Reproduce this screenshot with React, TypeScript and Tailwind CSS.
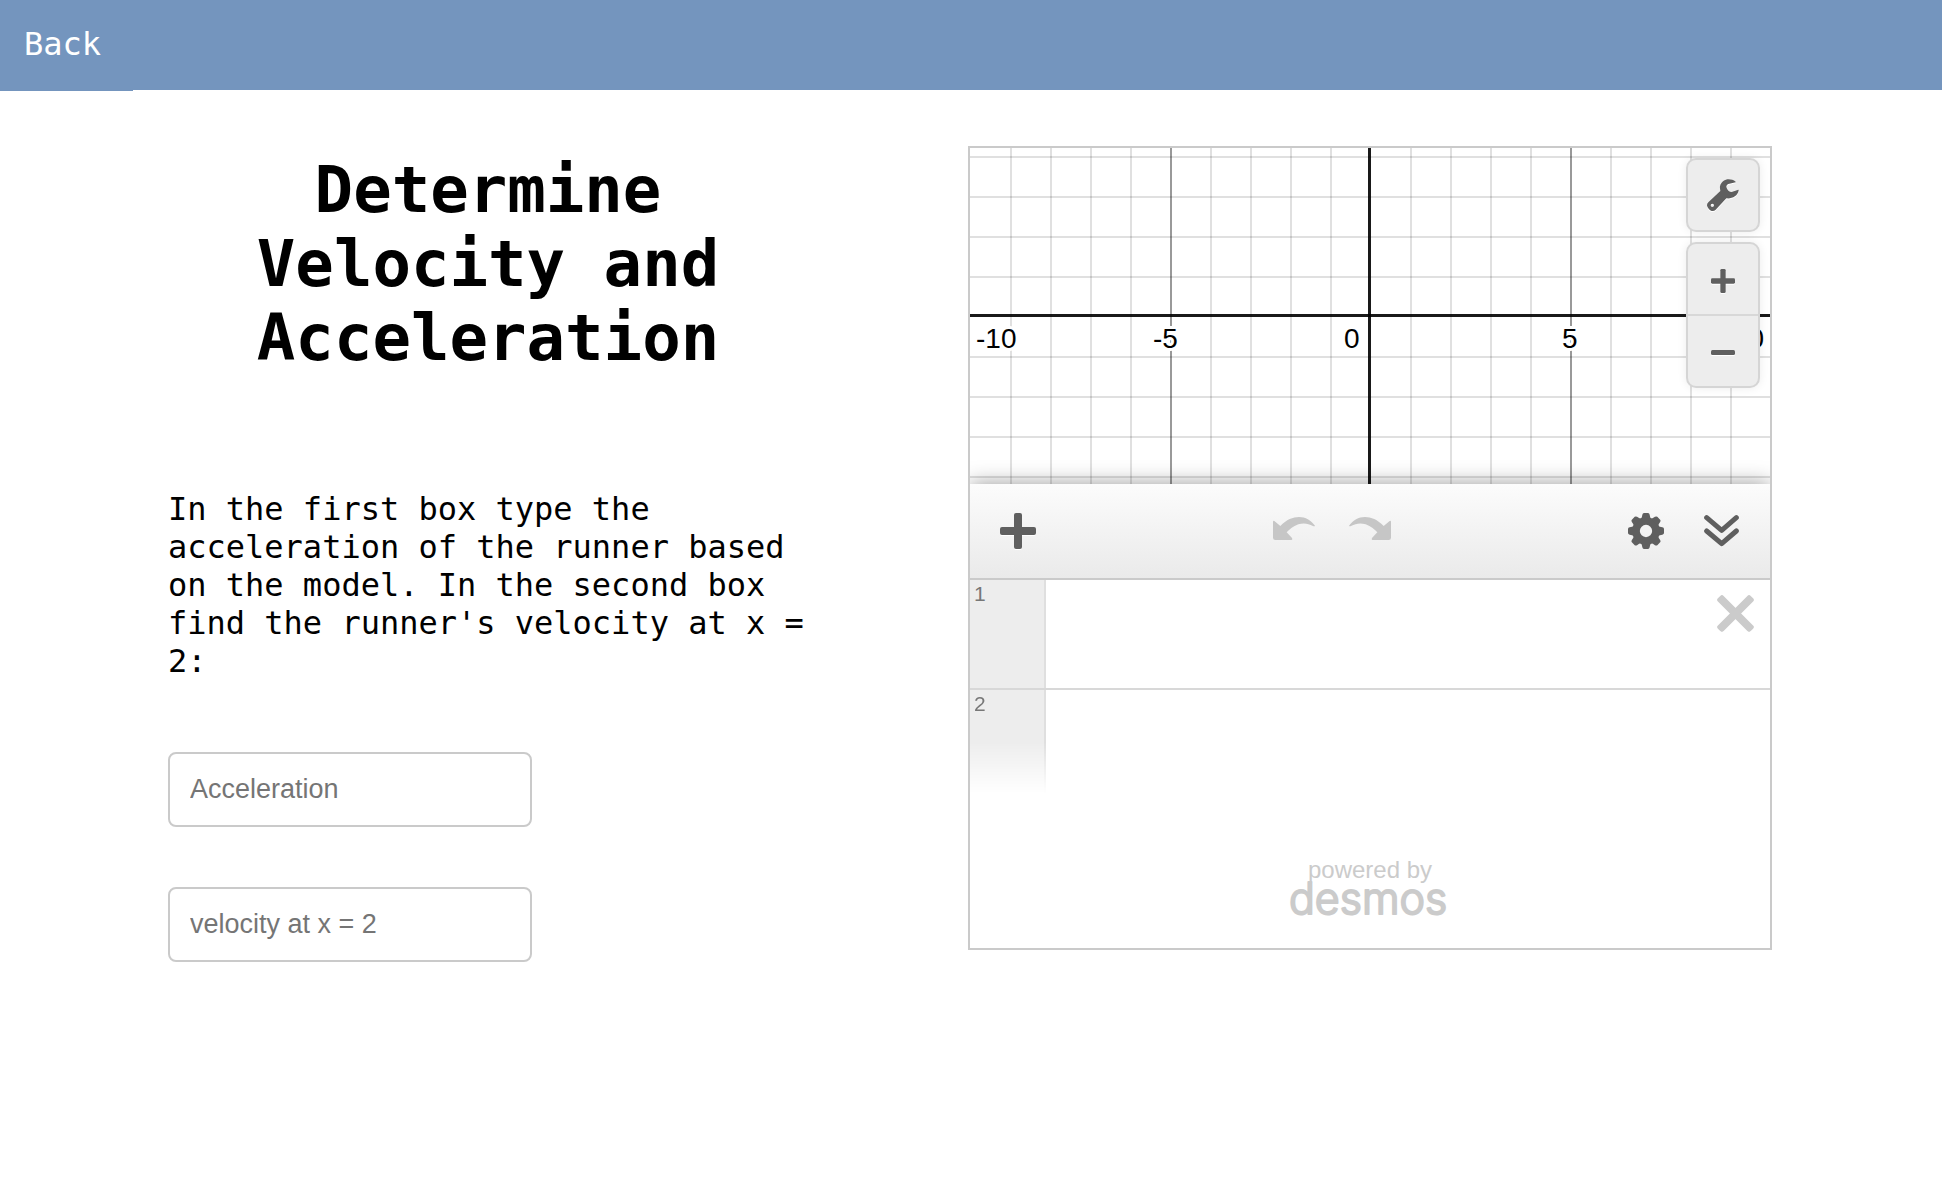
import React from "react";

const MINOR_X = Array.from({ length: 19 }, (_, i) => i + 1).filter((k) => k !== 10);
const MINOR_Y = [0, 1, 2, 3, 5, 6, 7, 8];

function Graph() {
  return (
    <svg
      className="block h-[336px] w-full font-['Liberation_Sans',Arial,sans-serif] text-[28px]"
      viewBox="0 0 800 336"
      preserveAspectRatio="xMidYMid slice"
      role="img"
      aria-label="Coordinate grid"
    >
      {MINOR_X.map((k) => (
        <rect key={k} x={k * 40} y="0" width="2" height="336" fill="#000" fillOpacity={k % 5 === 0 ? 0.4 : 0.12} />
      ))}
      {MINOR_Y.map((k) => (
        <rect key={k} x="0" y={8 + k * 40} width="800" height="2" fill="#000" fillOpacity="0.12" />
      ))}
      <rect x="398" y="0" width="3" height="336" fill="#000" fillOpacity="0.9" />
      <rect x="0" y="166" width="800" height="3" fill="#000" fillOpacity="0.9" />
      <g fill="#000" stroke="#fff" strokeWidth="6" strokeLinejoin="round" paintOrder="stroke">
        <text x="6" y="200">-10</text>
        <text x="183" y="200">-5</text>
        <text x="374" y="200">0</text>
        <text x="592" y="200">5</text>
        <text x="794" y="200" textAnchor="end">10</text>
      </g>
    </svg>
  );
}

function WrenchIcon() {
  return (
    <svg width="32" height="32" viewBox="0 0 96 96" fill="#5f5f5f" className="drop-shadow-[0_1px_0_#fff]" aria-hidden="true">
      <path
        fillRule="evenodd"
        d="M86 8C70 -4 45 -2 39 22C38 28 40 32 40 36L4 70C-2 76 -1 83 5 89C11 97 20 98 26 92L58 58C75 60 92 52 95 34C95 32 94 32 92 33L74 39C67 39 60 33 58 24C58 20 60 17 64 15L86 10ZM16 74A5 5 0 1 0 16 84A5 5 0 1 0 16 74Z"
      />
    </svg>
  );
}

function PlusIcon({ size }: { size: number }) {
  return (
    <svg width={size} height={size} viewBox="0 0 36 36" fill="#5f5f5f" className="drop-shadow-[0_1px_0_#fff]" aria-hidden="true">
      <rect x="14" y="0" width="8" height="36" rx="2" />
      <rect x="0" y="14" width="36" height="8" rx="2" />
    </svg>
  );
}

function MinusIcon() {
  return (
    <svg width="24" height="24" viewBox="0 0 24 24" fill="#5f5f5f" className="drop-shadow-[0_1px_0_#fff]" aria-hidden="true">
      <rect x="0" y="9" width="24" height="5" rx="1.5" />
    </svg>
  );
}

function ArrowIcon({ flipped = false }: { flipped?: boolean }) {
  return (
    <svg width="42" height="23" viewBox="0 0 126 69" fill="#c6c6c6" aria-hidden="true">
      <path
        transform={flipped ? "translate(126 0) scale(-1 1)" : undefined}
        d="M4 12L22 27C40 8 60 0 78 0C98 0 113 10 126 26C124 29 122 28 120 27C105 19 92 17 76 22C60 28 48 38 41 46L57 63Q60 69 53 69H7Q0 69 0 62V15Q0 10 4 12Z"
      />
    </svg>
  );
}

function GearIcon() {
  return (
    <svg width="36" height="36" viewBox="-54 -54 108 108" fill="#5f5f5f" aria-hidden="true">
      <circle r="30" fill="none" stroke="#5f5f5f" strokeWidth="23" />
      {[0, 45, 90, 135, 180, 225, 270, 315].map((a) => (
        <path key={a} transform={`rotate(${a})`} d="M-15 -36Q-12 -41 -11 -49Q-10 -54 -6 -54H6Q10 -54 11 -49Q12 -41 15 -36Z" />
      ))}
    </svg>
  );
}

function ChevronsIcon() {
  return (
    <svg width="35" height="32" viewBox="0 0 105 96" fill="none" stroke="#5f5f5f" strokeWidth="15" strokeLinecap="round" strokeLinejoin="round" aria-hidden="true">
      <path d="M8 8L53 46L97 8M8 48L53 86L97 48" />
    </svg>
  );
}

function CloseIcon() {
  return (
    <svg width="37" height="37" viewBox="-55 -55 110 110" fill="#cbcbcb" aria-hidden="true">
      <rect x="-69" y="-12" width="138" height="24" rx="7" transform="rotate(45)" />
      <rect x="-69" y="-12" width="138" height="24" rx="7" transform="rotate(-45)" />
    </svg>
  );
}

function Wordmark() {
  return (
    <svg width="160" height="36" viewBox="0 0 160 36" className="overflow-visible font-['Inter',sans-serif] text-[43px] font-light">
      <text x="78" y="30" textAnchor="middle" fill="#cbcbcb" stroke="#cbcbcb" strokeWidth="2" strokeLinejoin="round">
        desmos
      </text>
    </svg>
  );
}

function Calculator() {
  return (
    <section
      aria-label="Graphing calculator"
      className="flex w-[804px] shrink-0 flex-col overflow-hidden border-2 border-[#cacaca] bg-white font-['Liberation_Sans',Arial,sans-serif]"
    >
      <div className="relative">
        <Graph />
        <div className="absolute top-2.5 right-2.5 flex w-[74px] flex-col gap-2.5">
          <button
            aria-label="Graph settings"
            className="flex h-[74px] items-center justify-center rounded-[10px] border-2 border-[#d5d5d5] bg-[#ededed] shadow-[0_0_10px_rgba(0,0,0,0.08)]"
          >
            <WrenchIcon />
          </button>
          <div className="flex flex-col overflow-hidden rounded-[10px] border-2 border-[#d5d5d5] bg-[#ededed] shadow-[0_0_10px_rgba(0,0,0,0.08)]">
            <button aria-label="Zoom in" className="flex h-[72px] items-center justify-center border-b-2 border-[#d8d8d8] pt-1">
              <PlusIcon size={24} />
            </button>
            <button aria-label="Zoom out" className="flex h-[70px] items-center justify-center pt-1">
              <MinusIcon />
            </button>
          </div>
        </div>
      </div>

      <div className="relative flex h-24 items-stretch border-b-2 border-[#cacaca] bg-linear-to-b from-[#fcfcfc] to-[#eaeaea] pr-2.5 shadow-[0_0_20px_rgba(0,0,0,0.4)]">
        <button aria-label="Add item" className="flex w-24 items-center justify-center">
          <PlusIcon size={36} />
        </button>
        <div className="flex flex-1 justify-center pr-2.5 pb-1.5">
          <button aria-label="Undo" className="flex w-[76px] items-center justify-center">
            <ArrowIcon />
          </button>
          <button aria-label="Redo" className="flex w-[76px] items-center justify-center">
            <ArrowIcon flipped />
          </button>
        </div>
        <button aria-label="Edit list" className="flex w-[76px] items-center justify-center">
          <GearIcon />
        </button>
        <button aria-label="Hide list" className="flex w-[76px] items-center justify-center pr-0.5">
          <ChevronsIcon />
        </button>
      </div>

      <div className="relative flex h-[110px] border-b-2 border-[#d8d8d8] bg-white">
        <div className="w-[76px] border-r-2 border-[#dfdfdf] bg-[#ededed] px-1 pt-1 text-[21px] leading-5 text-[#777]">1</div>
        <input aria-label="Expression 1" className="min-w-0 flex-1 px-4 text-[28px] outline-none" />
        <button aria-label="Delete expression 1" className="flex items-start pt-[15px] pr-4">
          <CloseIcon />
        </button>
      </div>

      <div className="relative flex h-[104px] bg-white">
        <div className="w-[76px] border-r-2 border-[#dfdfdf] bg-[#ededed] [mask-image:linear-gradient(#000_50%,transparent)] px-1 pt-1 text-[21px] leading-5 text-[#777]">
          2
        </div>
      </div>

      <div className="flex h-[154px] flex-col items-center pt-[62px] text-[#cbcbcb]">
        <span className="text-[24px] leading-7">powered by</span>
        <Wordmark />
      </div>
    </section>
  );
}

function AnswerField({ label }: { label: string }) {
  return (
    <input
      type="text"
      aria-label={label}
      placeholder={label}
      className="h-[75px] w-[364px] rounded-lg border-2 border-[#cacaca] px-5 font-['Liberation_Sans',Arial,sans-serif] text-[27px] text-black placeholder:text-[#757575]"
    />
  );
}

export default function App() {
  return (
    <div className="min-h-screen bg-white font-['DejaVu_Sans_Mono',monospace] text-[32px] leading-[38px] text-black">
      <header className="h-[90px] bg-[#7495be]">
        <a href="#" className="inline-block bg-[#7495be] pt-[25px] pr-8 pb-7 pl-6 text-white">
          Back
        </a>
      </header>
      <main className="flex items-start gap-40 pt-14 pr-[170px] pl-[168px]">
        <div className="flex min-w-0 flex-1 flex-col pt-[7px]">
          <h1 className="text-center text-[64px] leading-[74px] font-bold">Determine Velocity and Acceleration</h1>
          <p className="mt-[115px]">
            In the first box type the acceleration of the runner based on the model. In the second box find the
            runner's velocity at x = 2:
          </p>
          <form className="mt-[72px] flex flex-col items-start gap-[60px]">
            <AnswerField label="Acceleration" />
            <AnswerField label="velocity at x = 2" />
          </form>
        </div>
        <Calculator />
      </main>
    </div>
  );
}
